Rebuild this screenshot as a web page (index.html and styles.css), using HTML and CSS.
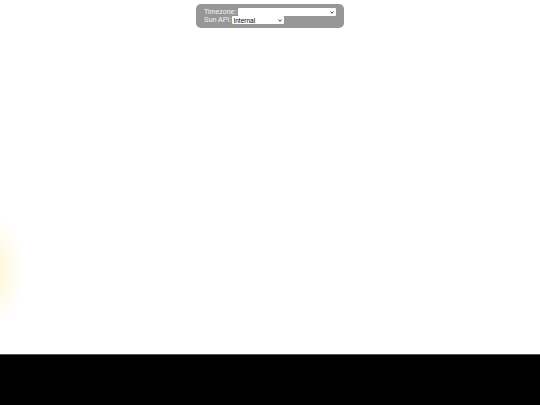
FILE: index.html
```html
<!DOCTYPE html>
<html>
<head>
<meta charset="utf-8">
<link rel="stylesheet" href="styles.css">
</head>
<body>
<div class="scene">
  <div class="glow"></div>
  <div class="panel">
    <div class="row"><label class="lbl">Timezone:</label><span class="selwrap tz"><select class="sel"><option></option></select><svg class="chev" viewBox="0 0 4 3" width="4" height="3"><path d="M0.4 0.5 L2 2.3 L3.6 0.5" fill="none" stroke="#222" stroke-width="0.9"/></svg></span></div>
    <div class="row"><label class="lbl">Sun API:</label><span class="selwrap api"><select class="sel"><option>Internal</option></select><svg class="chev" viewBox="0 0 4 3" width="4" height="3"><path d="M0.4 0.5 L2 2.3 L3.6 0.5" fill="none" stroke="#222" stroke-width="0.9"/></svg></span></div>
  </div>
</div>
<div class="ground"></div>
</body>
</html>
```
FILE: styles.css
```css
html, body { margin: 0; padding: 0; }
body { width: 540px; height: 405px; overflow: hidden; background: #000; font-family: "Liberation Sans", Arial, sans-serif; }
.scene { position: relative; height: 354px; background: #fff; display: flex; justify-content: center; align-items: flex-start; overflow: hidden; }
.glow { position: absolute; left: -36px; top: 215px; width: 60px; height: 110px; border-radius: 50%; background: radial-gradient(ellipse at center, rgba(255,238,160,0.5) 0%, rgba(255,245,205,0.3) 45%, rgba(255,255,255,0) 75%); }
.panel { margin-top: 4px; width: 140px; height: 20px; padding: 4px 0 0 8px; background: #979797; border-radius: 5px; color: #f4f4f4; font-size: 7px; line-height: 8px; }
.row { display: flex; align-items: center; height: 8px; }
.lbl { margin-right: 1.2px; }
.selwrap { position: relative; display: block; height: 8px; }
.sel { appearance: none; -webkit-appearance: none; display: block; width: 100%; font-family: "Liberation Sans", Arial, sans-serif; font-size: 6.5px; line-height: 7px; height: 8px; padding: 0 0 0 1px; margin: 0; border: none; border-radius: 1px; background: #fff; color: #000; }
.chev { position: absolute; right: 2px; top: 3px; }
.tz { width: 98px; }
.api { width: 52px; }
.ground { height: 50px; background: #000; border-top: 1px solid #555; }
```
